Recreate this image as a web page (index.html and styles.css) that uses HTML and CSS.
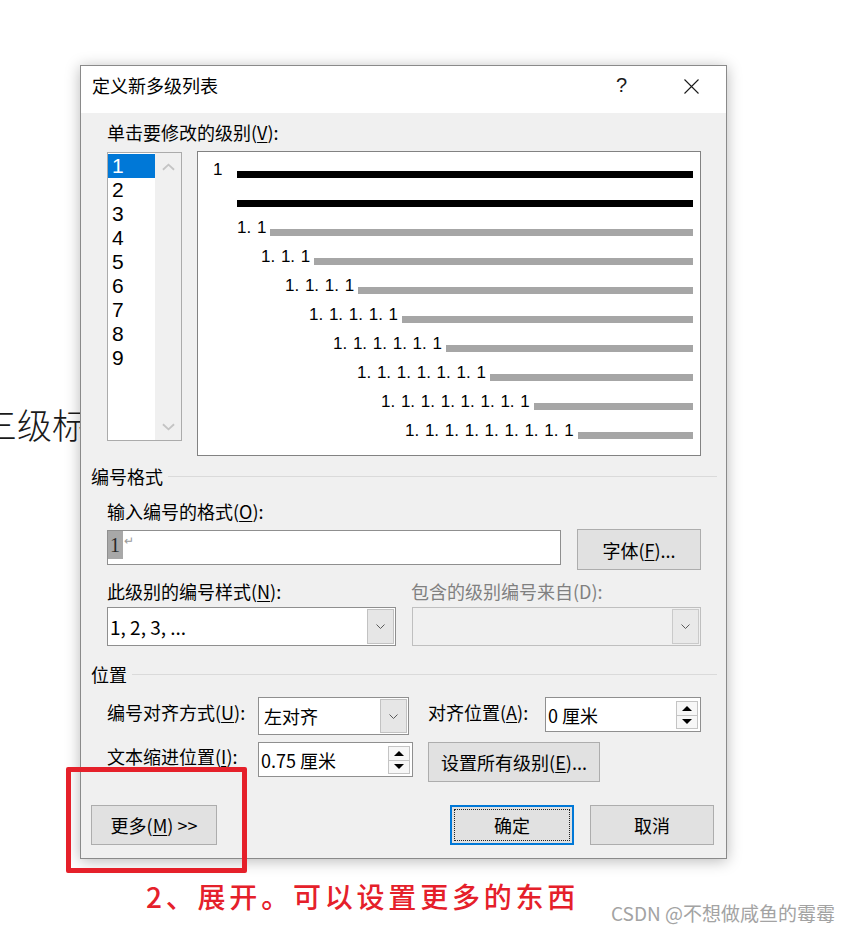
FILE: index.html
```html
<!DOCTYPE html>
<html lang="zh-CN">
<head>
<meta charset="utf-8">
<title>定义新多级列表</title>
<link rel="stylesheet" href="styles.css">
</head>
<body>
<div class="page">
  <div class="bg-text">三级标</div>

  <div class="dialog">
    <div class="titlebar">
      <span class="title">定义新多级列表</span>
      <span class="help">?</span>
      <svg class="close" viewBox="0 0 15 15"><path d="M0.5 0.5L14.5 14.5M14.5 0.5L0.5 14.5" stroke="#1a1a1a" stroke-width="1.1" fill="none"/></svg>
    </div>

    <div class="body">
      <div class="lbl lbl-top">单击要修改的级别(<u>V</u>):</div>

      <div class="level-row">
        <div class="listbox">
          <div class="items">
            <div class="item sel">1</div>
            <div class="item">2</div>
            <div class="item">3</div>
            <div class="item">4</div>
            <div class="item">5</div>
            <div class="item">6</div>
            <div class="item">7</div>
            <div class="item">8</div>
            <div class="item">9</div>
          </div>
          <div class="vscroll">
            <svg class="chev" viewBox="0 0 14 8"><polyline points="1,7 7,1.5 13,7" fill="none" stroke="#c4c4c4" stroke-width="2"/></svg>
            <svg class="chev" viewBox="0 0 14 8"><polyline points="1,1 7,6.5 13,1" fill="none" stroke="#c4c4c4" stroke-width="2"/></svg>
          </div>
        </div>

        <div class="preview">
          <div class="prow r1"><span class="num num1">1</span><span class="bar black"></span></div>
          <div class="prow r1b"><span class="bar black"></span></div>
          <div class="prow r2"><span class="num">1. 1</span><span class="bar"></span></div>
          <div class="prow r3"><span class="num">1. 1. 1</span><span class="bar"></span></div>
          <div class="prow r4"><span class="num">1. 1. 1. 1</span><span class="bar"></span></div>
          <div class="prow r5"><span class="num">1. 1. 1. 1. 1</span><span class="bar"></span></div>
          <div class="prow r6"><span class="num">1. 1. 1. 1. 1. 1</span><span class="bar"></span></div>
          <div class="prow r7"><span class="num">1. 1. 1. 1. 1. 1. 1</span><span class="bar"></span></div>
          <div class="prow r8"><span class="num">1. 1. 1. 1. 1. 1. 1. 1</span><span class="bar"></span></div>
          <div class="prow r9"><span class="num">1. 1. 1. 1. 1. 1. 1. 1. 1</span><span class="bar"></span></div>
        </div>
      </div>

      <div class="group g-format"><span>编号格式</span><i class="rule"></i></div>

      <div class="lbl lbl-fmt">输入编号的格式(<u>O</u>):</div>
      <div class="fmt-row">
        <div class="textbox"><span class="hl">1</span><span class="ret">↵</span></div>
        <div class="btn btn-font">字体(<u>F</u>)...</div>
      </div>

      <div class="lbl-row">
        <span class="lbl lbl-style">此级别的编号样式(<u>N</u>):</span>
        <span class="lbl-dis">包含的级别编号来自(D):</span>
      </div>
      <div class="sel-row">
        <div class="select sel-wide"><span class="val">1, 2, 3, ...</span><span class="dd"><svg class="dchev" viewBox="0 0 9 5"><polyline points="0.5,0.5 4.5,4.5 8.5,0.5" fill="none" stroke="#5a5a5a" stroke-width="1"/></svg></span></div>
        <div class="select sel-wide disabled"><span class="val"></span><span class="dd"><svg class="dchev" viewBox="0 0 9 5"><polyline points="0.5,0.5 4.5,4.5 8.5,0.5" fill="none" stroke="#5a5a5a" stroke-width="1"/></svg></span></div>
      </div>

      <div class="group g-pos"><span>位置</span><i class="rule"></i></div>

      <div class="pos-grid">
        <span class="lbl-g r1l">编号对齐方式(<u>U</u>):</span>
        <div class="select sel-align"><span class="val">左对齐</span><span class="dd"><svg class="dchev" viewBox="0 0 9 5"><polyline points="0.5,0.5 4.5,4.5 8.5,0.5" fill="none" stroke="#5a5a5a" stroke-width="1"/></svg></span></div>
        <span class="lbl-g r1l">对齐位置(<u>A</u>):</span>
        <div class="spin"><span class="val">0 厘米</span><span class="spinbtns"><span class="sb"><svg class="tri" viewBox="0 0 10 5"><polygon points="0,5 5,0 10,5" fill="#000"/></svg></span><span class="sb"><svg class="tri" viewBox="0 0 10 5"><polygon points="0,0 10,0 5,5" fill="#000"/></svg></span></span></div>

        <span class="lbl-g r2l">文本缩进位置(<u>I</u>):</span>
        <div class="spin spin-b"><span class="val">0.75 厘米</span><span class="spinbtns"><span class="sb"><svg class="tri" viewBox="0 0 10 5"><polygon points="0,5 5,0 10,5" fill="#000"/></svg></span><span class="sb"><svg class="tri" viewBox="0 0 10 5"><polygon points="0,0 10,0 5,5" fill="#000"/></svg></span></span></div>
        <div class="btn btn-all">设置所有级别(<u>E</u>)...</div>
      </div>

      <div class="bottom-row">
        <div class="btn btn-more">更多(<u>M</u>) &gt;&gt;</div>
        <div class="btn btn-ok">确定</div>
        <div class="btn btn-cancel">取消</div>
      </div>
    </div>
  </div>

  <div class="redbox"></div>

  <div class="footer">
    <span class="note">2、展开。可以设置更多的东西</span>
    <span class="mark">CSDN @不想做咸鱼的霉霉</span>
  </div>
</div>
</body>
</html>
```

FILE: styles.css
```css
* { box-sizing: border-box; }

body {
  margin: 0;
  background: #fff;
  font-family: "Noto Sans CJK SC", "Noto Sans", sans-serif;
  color: #000;
}

.page {
  position: relative;
  width: 851px;
  height: 933px;
  overflow: hidden;
  padding-top: 65px;
}

.bg-text {
  position: absolute;
  left: -18px;
  top: 404px;
  font-size: 35px;
  line-height: 40px;
  font-weight: 300;
  color: #1a1a1a;
  white-space: nowrap;
}

.dialog {
  position: relative;
  z-index: 1;
  margin-left: 80px;
  width: 647px;
  height: 794px;
  border: 1px solid #8a8a8a;
  background: #f0f0f0;
  box-shadow: 0 2px 14px rgba(0, 0, 0, 0.28);
  display: flex;
  flex-direction: column;
}

.titlebar {
  flex: none;
  height: 47px;
  background: #fff;
  display: flex;
  align-items: flex-start;
  padding: 7px 0 0 11px;
}

.title { font-size: 18px; line-height: 24px; }

.help {
  margin-left: auto;
  font-family: "Liberation Sans", sans-serif;
  font-size: 20px;
  line-height: 24px;
  color: #1a1a1a;
}

.close {
  flex: none;
  width: 15px;
  height: 15px;
  margin: 6px 27px 0 57px;
}

.body {
  flex: 1;
  display: flex;
  flex-direction: column;
  padding: 0 25px 0 10px;
  font-size: 18px;
  line-height: 24px;
}

u { text-decoration-thickness: 1px; text-underline-offset: 2px; }

.lbl { margin-left: 16px; white-space: nowrap; }
.lbl-top { margin-top: 7px; }

/* level selector + preview */
.level-row {
  display: flex;
  align-items: flex-start;
  gap: 15px;
  margin: 7px 0 0 16px;
}

.listbox {
  margin-top: 1px;
  width: 75px;
  height: 289px;
  border: 1px solid #ababab;
  background: #fff;
  display: flex;
}

.items { width: 47px; padding-top: 1px; }

.item {
  height: 24px;
  font-family: "Liberation Sans", sans-serif;
  font-size: 21px;
  line-height: 24px;
  padding-left: 4px;
}

.item.sel { background: #0078d7; color: #fff; }

.vscroll {
  flex: 1;
  background: #f0f0f0;
  display: flex;
  flex-direction: column;
  justify-content: space-between;
  align-items: center;
  padding: 10px 0 9px;
}

.chev { width: 13px; height: 8px; display: block; }

.preview {
  width: 504px;
  height: 305px;
  border: 1px solid #828282;
  background: #fff;
}

.prow {
  height: 29px;
  padding-bottom: 3px;
  display: flex;
  align-items: flex-end;
  padding-right: 7px;
}

.num {
  font-family: "Liberation Sans", sans-serif;
  font-size: 17px;
  line-height: 17px;
  word-spacing: 1px;
  white-space: nowrap;
  margin-right: 4px;
}

.num1 { width: 24px; margin-right: 0; }

.bar { flex: 1; height: 7px; background: #a6a6a6; }
.bar.black { background: #000; }

.r1 { padding-left: 15px; }
.r1b, .r2 { padding-left: 39px; }
.r3 { padding-left: 63px; }
.r4 { padding-left: 87px; }
.r5 { padding-left: 111px; }
.r6 { padding-left: 135px; }
.r7 { padding-left: 159px; }
.r8 { padding-left: 183px; }
.r9 { padding-left: 207px; }

/* group headings */
.group {
  display: flex;
  align-items: center;
  margin-right: -16px;
}

.group .rule {
  flex: 1;
  height: 1px;
  background: #dadada;
  margin-left: 5px;
}

.g-format { margin-top: 8px; }
.g-pos { margin-top: 16px; }

.lbl-fmt { margin-top: 11px; }

.fmt-row {
  display: flex;
  align-items: flex-start;
  gap: 16px;
  margin: 7px 0 0 16px;
}

.textbox {
  width: 454px;
  height: 35px;
  border: 1px solid #8f8f8f;
  background: #fff;
  display: flex;
  align-items: flex-start;
}

.hl {
  height: 28px;
  line-height: 28px;
  padding: 0 3px 0 2px;
  background: #a8a8a8;
  color: #2a2a2a;
  font-family: "Liberation Serif", serif;
  font-size: 20px;
}

.ret {
  font-size: 12px;
  line-height: 18px;
  color: #9a9a9a;
  margin-left: 1px;
}

.btn {
  background: #e1e1e1;
  border: 1px solid #adadad;
  display: flex;
  align-items: center;
  justify-content: center;
  white-space: nowrap;
}

.btn-font { width: 124px; height: 41px; margin-top: -1px; }

.lbl-row {
  display: flex;
  margin: 9px 0 0 16px;
  white-space: nowrap;
}

.lbl-style { width: 304px; margin-left: 0; }
.lbl-dis { color: #808080; }

.sel-row {
  display: flex;
  gap: 16px;
  margin: 4px 0 0 16px;
}

.select {
  display: flex;
  align-items: center;
  background: #fff;
  border: 1px solid #8f8f8f;
  padding: 1px;
}

.select .val { flex: 1; padding-left: 1px; white-space: nowrap; }

.select .dd {
  width: 27px;
  align-self: stretch;
  background: #e6e6e6;
  border: 1px solid #c2c2c2;
  display: flex;
  align-items: center;
  justify-content: center;
}

.dchev { width: 9px; height: 5px; display: block; }

.sel-wide { width: 289px; height: 39px; }
.sel-wide .val { font-size: 19px; }

.select.disabled { background: #f0f0f0; border-color: #bfbfbf; }
.select.disabled .dd { background: #e9e9e9; border-color: #cacaca; }

/* position grid */
.pos-grid {
  display: grid;
  grid-template-columns: 151px 170px 117px 156px;
  grid-template-rows: 38px 40px;
  row-gap: 7px;
  margin: 11px 0 0 16px;
  align-items: start;
}

.lbl-g { white-space: nowrap; }
.r1l { margin-top: 3px; }
.r2l { margin-top: 2px; }

.sel-align { width: 151px; height: 38px; }
.sel-align .val { padding-left: 4px; }

.spin {
  width: 156px;
  height: 35px;
  display: flex;
  align-items: center;
  background: #fff;
  border: 1px solid #8f8f8f;
  padding: 3px 2px 2px 0;
}

.spin-b { width: 155px; }

.spin .val { flex: 1; padding-left: 2px; white-space: nowrap; }

.spinbtns {
  width: 22px;
  align-self: stretch;
  display: flex;
  flex-direction: column;
}

.sb {
  flex: 1;
  border: 1px solid #c4c4c4;
  background: #f7f7f7;
  display: flex;
  align-items: center;
  justify-content: center;
}

.sb + .sb { border-top: none; }

.tri { width: 10px; height: 5px; display: block; }

.btn-all { width: 172px; height: 40px; }

/* bottom buttons */
.bottom-row {
  display: flex;
  margin: 23px -13px 0 0;
}

.btn-more { width: 126px; height: 40px; }

.btn-ok {
  position: relative;
  width: 124px;
  height: 40px;
  margin-left: auto;
  border: 2px solid #0078d7;
}

.btn-ok::after {
  content: "";
  position: absolute;
  inset: 2px;
  border: 1px dotted #222;
}

.btn-cancel { width: 124px; height: 40px; margin-left: 16px; }

/* annotation overlay */
.redbox {
  position: absolute;
  z-index: 2;
  left: 66px;
  top: 767px;
  width: 181px;
  height: 106px;
  border: 5px solid #e5202a;
  border-radius: 2px;
}

.footer {
  display: flex;
  align-items: flex-start;
  margin-top: 21px;
}

.note {
  margin-left: 146px;
  font-size: 28px;
  line-height: 32px;
  font-weight: 500;
  letter-spacing: 3.8px;
  color: #e5202a;
  white-space: nowrap;
}

.mark {
  margin: 21px 16px 0 auto;
  font-size: 19px;
  line-height: 24px;
  color: #a3a3a3;
  white-space: nowrap;
}
```
